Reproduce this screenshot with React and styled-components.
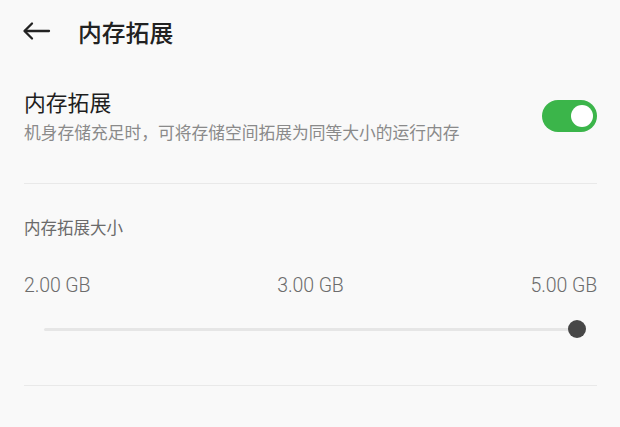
import React from 'react';
import styled, { createGlobalStyle } from 'styled-components';

const Global = createGlobalStyle`
  html, body {
    margin: 0;
    padding: 0;
    background: #f9f9f9;
    font-family: Roboto, "Noto Sans CJK SC", sans-serif;
  }
`;

const Page = styled.div`
  width: 620px;
  height: 427px;
  background: #f9f9f9;
  overflow: hidden;
`;

const Header = styled.div`
  display: flex;
  align-items: center;
  height: 62px;
  padding: 0 0 0 22px;
  gap: 27px;
`;

const BackBtn = styled.button`
  border: none;
  background: none;
  padding: 0;
  width: 29px;
  height: 24px;
  display: flex;
  align-items: center;
  color: #222;
`;

const Title = styled.h1`
  margin: 0;
  font-size: 23.8px;
  font-weight: 500;
  color: #222;
  font-family: "Noto Sans CJK SC", sans-serif;
`;

const Body = styled.div`
  padding: 0 23px 0 24px;
`;

const SwitchRow = styled.div`
  display: flex;
  align-items: center;
  justify-content: space-between;
  padding: 25px 0 40px;
  border-bottom: 1.5px solid #e9e9e9;
`;

const Texts = styled.div`
  display: flex;
  flex-direction: column;
  gap: 4px;
`;

const RowTitle = styled.div`
  font-family: "Noto Sans CJK SC", sans-serif;
  font-size: 21.8px;
  color: #1e1e1e;
  line-height: 30px;
`;

const RowDesc = styled.div`
  font-family: "Noto Sans CJK SC", sans-serif;
  font-size: 16.75px;
  color: #8a8a8a;
  line-height: 22px;
`;

const Toggle = styled.div`
  width: 55px;
  height: 32px;
  border-radius: 16px;
  background: ${p => (p.on ? '#3bb54a' : '#ccc')};
  display: flex;
  align-items: center;
  justify-content: ${p => (p.on ? 'flex-end' : 'flex-start')};
  padding: 0 4.5px;
  box-sizing: border-box;
  margin-top: 2px;
`;

const Knob = styled.div`
  width: 22px;
  height: 22px;
  border-radius: 50%;
  background: #fff;
`;

const SizeSection = styled.div`
  padding: 32px 0 46px;
  border-bottom: 1.5px solid #e9e9e9;
`;

const SectionLabel = styled.div`
  font-family: "Noto Sans CJK SC", sans-serif;
  font-size: 16.5px;
  color: #6a6a6a;
  line-height: 22px;
`;

const Marks = styled.div`
  display: flex;
  justify-content: space-between;
  margin-top: 36px;
`;

const Mark = styled.span`
  font-family: Roboto, sans-serif;
  font-size: 19.5px;
  font-weight: 300;
  letter-spacing: -0.1px;
  color: #6c6c6c;
  line-height: 24px;
`;

const Track = styled.div`
  position: relative;
  margin: 21px 20px 0 20px;
  height: 20px;
  display: flex;
  align-items: center;
`;

const Rail = styled.div`
  flex: 1;
  height: 3px;
  border-radius: 2px;
  background: #e6e6e6;
`;

const Thumb = styled.div`
  position: absolute;
  top: 50%;
  width: 18px;
  height: 18px;
  margin: -9px 0 0 -9px;
  border-radius: 50%;
  background: #474747;
`;

export default function App() {
  const value = 100;
  return (
    <Page>
      <Global />
      <Header>
        <BackBtn aria-label="back">
          <svg width="29" height="20" viewBox="0 0 29 20" fill="none" stroke="#222" strokeWidth="2.3" strokeLinecap="round" strokeLinejoin="round">
            <path d="M27 10H3" />
            <path d="M10 2.5L2.5 10L10 17.5" />
          </svg>
        </BackBtn>
        <Title>内存拓展</Title>
      </Header>
      <Body>
        <SwitchRow>
          <Texts>
            <RowTitle>内存拓展</RowTitle>
            <RowDesc>机身存储充足时，可将存储空间拓展为同等大小的运行内存</RowDesc>
          </Texts>
          <Toggle on>
            <Knob />
          </Toggle>
        </SwitchRow>
        <SizeSection>
          <SectionLabel>内存拓展大小</SectionLabel>
          <Marks>
            <Mark>2.00 GB</Mark>
            <Mark>3.00 GB</Mark>
            <Mark>5.00 GB</Mark>
          </Marks>
          <Track>
            <Rail />
            <Thumb style={{ left: `${value}%` }} />
          </Track>
        </SizeSection>
      </Body>
    </Page>
  );
}
